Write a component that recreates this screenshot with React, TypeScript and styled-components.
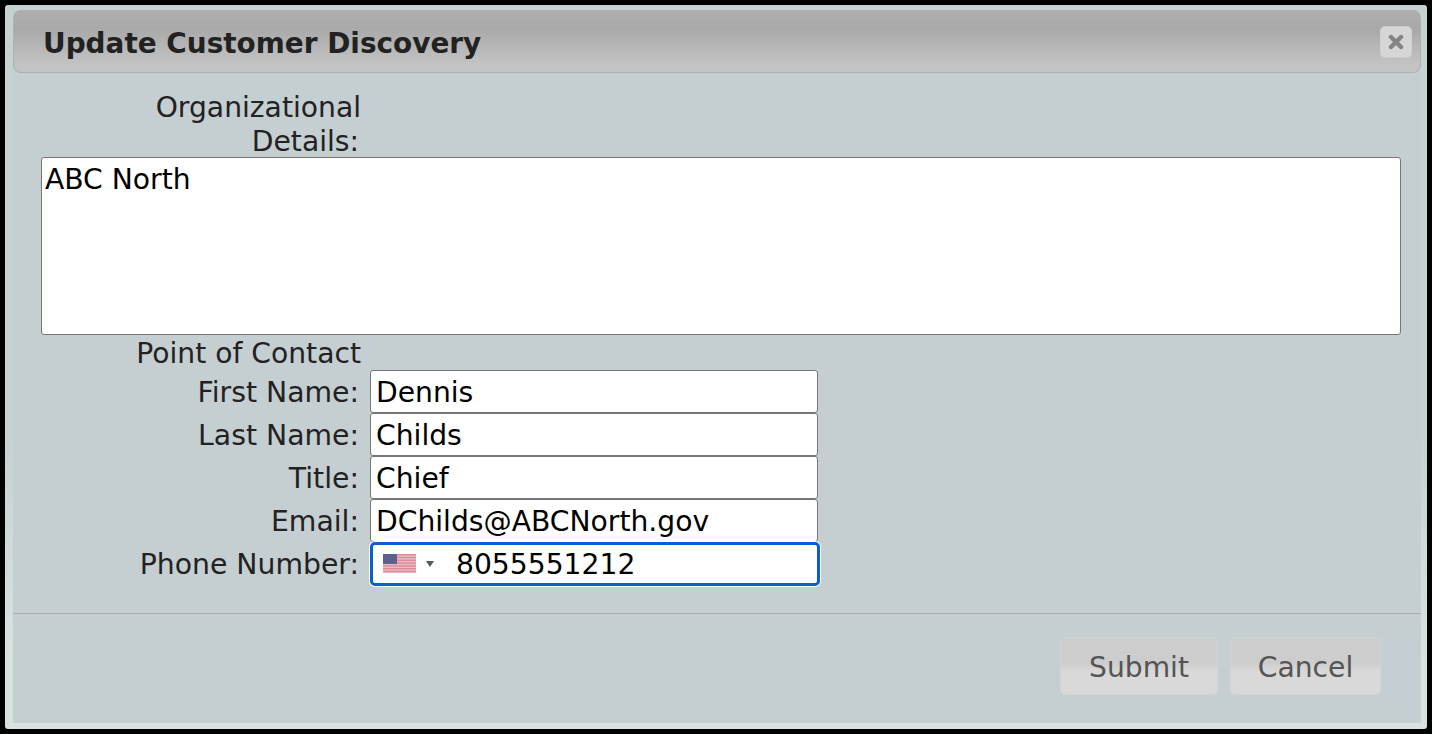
import { createGlobalStyle, styled } from 'styled-components';

const GlobalStyle = createGlobalStyle`
  html, body {
    margin: 0;
    padding: 0;
    background: #000;
  }
  * {
    box-sizing: border-box;
  }
`;

const Frame = styled.div`
  width: 1432px;
  height: 734px;
  padding: 5px;
  background: #000;
  font-family: 'DejaVu Sans', sans-serif;
`;

const Dialog = styled.div`
  width: 1422px;
  height: 724px;
  padding: 5px 6px 6px 8px;
  background: linear-gradient(to bottom, #c6d1d1 0%, #c6d1d1 60%, #d8e3e0 90%);
  border-radius: 3px;
`;

const Body = styled.div`
  height: 100%;
  display: flex;
  flex-direction: column;
  background: #c5cfd1;
`;

const TitleBar = styled.div`
  height: 63px;
  flex: none;
  display: flex;
  align-items: center;
  justify-content: space-between;
  padding: 2px 8px 0 29px;
  background: linear-gradient(to bottom, #aeaeae 0%, #a9a9a9 30%, #c2c2c2 85%, #c4c4c4 100%);
  border: 1px solid #aab2b2;
  border-top: none;
  border-radius: 8px;
`;

const Title = styled.h1`
  margin: 2px 0 0;
  font-size: 27.9px;
  font-weight: 700;
  color: #222;
`;

const CloseButton = styled.button`
  width: 32px;
  height: 32px;
  padding: 0;
  display: flex;
  align-items: center;
  justify-content: center;
  background: #d6d6d6;
  border: 1px solid #d0d0d0;
  border-radius: 5px;
`;

const Content = styled.div`
  flex: 1;
  padding: 17px 0 0 28px;
`;

const LabelLine = styled.div<{ $inset?: boolean }>`
  width: ${({ $inset }) => ($inset ? 318 : 320)}px;
  height: 34px;
  padding-top: 1px;
  font-size: 28.2px;
  line-height: 34px;
  color: #222;
  text-align: right;
  white-space: nowrap;
`;

const Notes = styled.textarea`
  display: block;
  width: 1360px;
  height: 178px;
  margin: -1px 0 1px;
  padding: 5px 3px 3px;
  font-family: inherit;
  font-size: 28.2px;
  line-height: 34px;
  color: #000;
  background: #fff;
  border: 1px solid #767676;
  border-radius: 3px;
  resize: none;
  outline: none;
`;

const Row = styled.div`
  display: flex;
  align-items: center;
  height: 43px;
  gap: 11px;
`;

const RowLabel = styled.label`
  width: 318px;
  padding-top: 2px;
  font-size: 28.3px;
  color: #222;
  text-align: right;
  white-space: nowrap;
`;

const TextField = styled.input`
  width: 448px;
  height: 43px;
  padding: 2px 5px 0;
  font-family: inherit;
  font-size: 28.2px;
  color: #000;
  background: #fff;
  border: 1px solid #767676;
  border-radius: 3px;
  outline: none;
`;

const PhoneField = styled.div`
  width: 450px;
  height: 44px;
  display: flex;
  align-items: center;
  background: #fff;
  border: 3px solid #0a5fcf;
  border-radius: 5px;
  box-shadow: 0 0 0 1px #fff;
`;

const Caret = styled.span`
  width: 0;
  height: 0;
  margin-left: 10px;
  border-left: 4px solid transparent;
  border-right: 4px solid transparent;
  border-top: 6px solid #5a5a5a;
`;

const PhoneInput = styled.input`
  flex: 1;
  min-width: 0;
  margin-left: 22px;
  padding: 2px 0 0;
  border: none;
  outline: none;
  font-family: inherit;
  font-size: 28.2px;
  color: #000;
  background: transparent;
`;

const Footer = styled.div`
  flex: none;
  height: 110px;
  display: flex;
  justify-content: flex-end;
  align-items: flex-start;
  gap: 12px;
  padding: 23px 40px 0 0;
  border-top: 1px solid #a9afb0;
`;

const ActionButton = styled.button<{ $width: number }>`
  width: ${({ $width }) => $width}px;
  height: 58px;
  padding: 2px 0 0;
  font-family: inherit;
  font-size: 28.2px;
  color: #555;
  background: linear-gradient(to bottom, #cdcdcd 0%, #cdcdcd 45%, #d9d9d9 60%, #d9d9d9 100%);
  border: 1px solid #d0d4d4;
  border-radius: 5px;
`;

const FlagIcon = styled.svg`
  flex: none;
  margin-left: 10px;
  filter: blur(0.6px);
`;

function UsFlag() {
  const stripes = [0, 1, 2, 3, 4, 5, 6];
  return (
    <FlagIcon width="33" height="19" viewBox="0 0 33 19">
      <rect width="33" height="19" fill="#eabcc3" />
      {stripes.map((s) => (
        <rect key={s} y={s * 2.8} width="33" height="1.4" fill="#dc8b97" />
      ))}
      <rect width="14" height="10" fill="#5c5f90" />
    </FlagIcon>
  );
}

export default function App() {
  return (
    <Frame>
      <GlobalStyle />
      <Dialog>
        <Body>
          <TitleBar>
            <Title>Update Customer Discovery</Title>
            <CloseButton aria-label="Close">
              <svg width="16" height="16" viewBox="0 0 16 16">
                <path d="M3 3 L13 13 M13 3 L3 13" stroke="#848484" strokeWidth="4.4" strokeLinecap="round" />
              </svg>
            </CloseButton>
          </TitleBar>
          <Content>
            <LabelLine>Organizational</LabelLine>
            <LabelLine $inset>Details:</LabelLine>
            <Notes defaultValue="ABC North" />
            <LabelLine>Point of Contact</LabelLine>
            <Row>
              <RowLabel>First Name:</RowLabel>
              <TextField defaultValue="Dennis" />
            </Row>
            <Row>
              <RowLabel>Last Name:</RowLabel>
              <TextField defaultValue="Childs" />
            </Row>
            <Row>
              <RowLabel>Title:</RowLabel>
              <TextField defaultValue="Chief" />
            </Row>
            <Row>
              <RowLabel>Email:</RowLabel>
              <TextField defaultValue="DChilds@ABCNorth.gov" />
            </Row>
            <Row>
              <RowLabel>Phone Number:</RowLabel>
              <PhoneField>
                <UsFlag />
                <Caret />
                <PhoneInput defaultValue="8055551212" />
              </PhoneField>
            </Row>
          </Content>
          <Footer>
            <ActionButton $width={158}>Submit</ActionButton>
            <ActionButton $width={151}>Cancel</ActionButton>
          </Footer>
        </Body>
      </Dialog>
    </Frame>
  );
}
